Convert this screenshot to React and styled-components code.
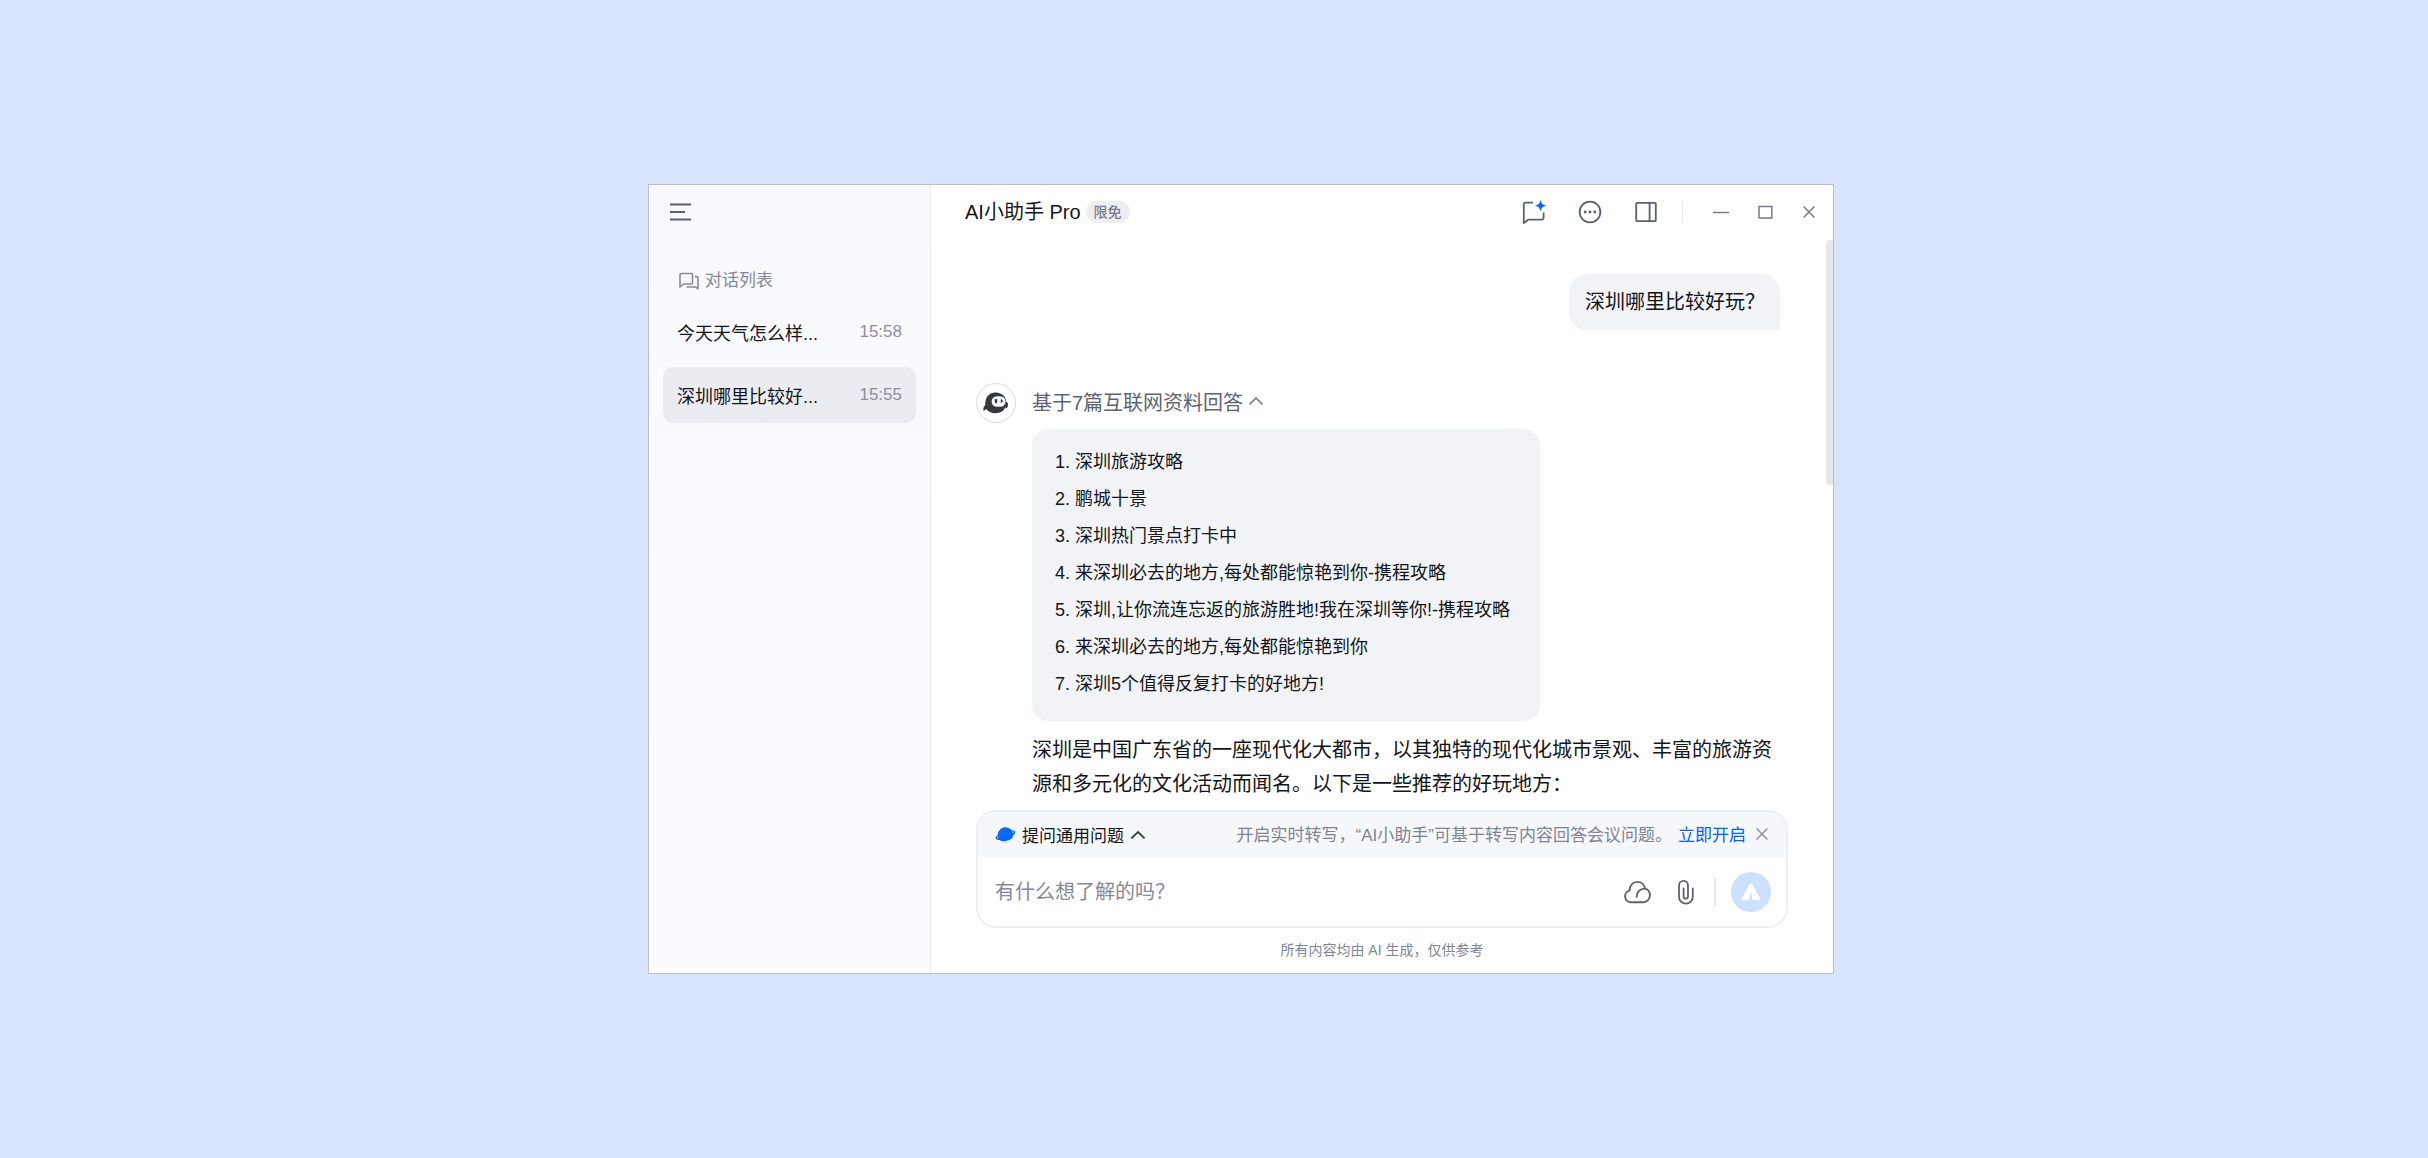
import React, { useState } from "react";
import styled, { createGlobalStyle } from "styled-components";

const GlobalStyle = createGlobalStyle`
  *, *::before, *::after { box-sizing: border-box; }
  body {
    margin: 0;
    background: #d8e3fe;
    color: #14151a;
    font-family: "Liberation Sans", "Noto Sans CJK SC", sans-serif;
    font-size: 20px;
  }
  button, input { font: inherit; color: inherit; }
  svg { display: block; flex: none; }
`;

const Desktop = styled.div`
  min-height: 100vh;
  display: grid;
  place-items: center;
  padding: 24px 0 24px 54px;
`;

const Window = styled.div`
  display: grid;
  grid-template-columns: 282px minmax(0, 1fr);
  width: 100%;
  max-width: 1186px;
  border: 1px solid #bdbfc4;
  background: #ffffff;
`;

const Sidebar = styled.aside`
  border-right: 1px solid #e9ebf1;
  background: linear-gradient(180deg, #f7f9fd 0%, #fbfcff 60%, #fcfcff 100%);
`;

const SidebarTop = styled.div`
  display: flex;
  align-items: center;
  height: 55px;
  padding: 0 21px 2px;
`;

const IconButton = styled.button`
  display: flex;
  align-items: center;
  justify-content: center;
  flex: none;
  padding: 0;
  border: 0;
  background: none;
  color: ${(p) => p.$color || "#5c6170"};
  cursor: pointer;
`;

const SectionTitle = styled.h2`
  display: flex;
  align-items: center;
  gap: 6px;
  margin: 29px 0 11px;
  padding: 0 30px;
  font-size: 17px;
  font-weight: 400;
  line-height: 24px;
  color: #868a99;
`;

const ConversationList = styled.ul`
  display: flex;
  flex-direction: column;
  gap: 7px;
  margin: 0;
  padding: 0 14px;
  list-style: none;
`;

const Conversation = styled.button`
  display: flex;
  align-items: center;
  justify-content: space-between;
  width: 100%;
  height: 56px;
  padding: 0 14px;
  border: 0;
  border-radius: 10px;
  background: ${(p) => (p.$active ? "#ebecf2" : "transparent")};
  font-size: 18px;
  text-align: left;
  cursor: pointer;
`;

const Time = styled.time`
  font-size: 17px;
  color: #8c8f9d;
`;

const Main = styled.main`
  display: flex;
  flex-direction: column;
  min-width: 0;
`;

const Header = styled.header`
  display: flex;
  align-items: center;
  justify-content: space-between;
  height: 55px;
  padding: 0 18px 2px 34px;
`;

const TitleGroup = styled.div`
  display: flex;
  align-items: center;
  gap: 5px;
`;

const Title = styled.h1`
  margin: 0;
  font-size: 20px;
  font-weight: 400;
  line-height: 28px;
`;

const Badge = styled.span`
  padding: 0 8px;
  border-radius: 11px;
  background: #edeef0;
  font-size: 14px;
  font-weight: 500;
  line-height: 22px;
  color: #777c8c;
`;

const Toolbar = styled.div`
  display: flex;
  align-items: center;
  gap: ${(p) => p.$gap}px;
`;

const Divider = styled.span`
  flex: none;
  width: ${(p) => p.$width}px;
  height: ${(p) => p.$height}px;
  margin: ${(p) => p.$margin};
  background: #e6e8ec;
`;

const ChatArea = styled.section`
  position: relative;
  display: flex;
  flex-direction: column;
  gap: 53px;
  padding: 34px 53px 9px 45px;
`;

const ScrollThumb = styled.div`
  position: absolute;
  top: 0;
  right: 0;
  width: 7px;
  height: 43%;
  border-radius: 4px 0 0 4px;
  background: #e5e7ea;
`;

const UserBubble = styled.p`
  align-self: flex-end;
  margin: 0;
  padding: 12px 15px 12px 16px;
  border-radius: 18px 18px 0 18px;
  background: #f1f3f7;
  line-height: 32px;
`;

const Answer = styled.article`
  display: flex;
  align-items: flex-start;
  gap: 16px;
`;

const Avatar = styled.div`
  display: grid;
  place-items: center;
  flex: none;
  width: 40px;
  height: 40px;
  border: 1px solid #d9dce3;
  border-radius: 50%;
`;

const AnswerBody = styled.div`
  flex: 1;
  min-width: 0;
`;

const SourceToggle = styled.button`
  display: flex;
  align-items: center;
  gap: 5px;
  height: 36px;
  padding: 0;
  border: 0;
  background: none;
  color: #5e6373;
  cursor: pointer;
`;

const Sources = styled.ol`
  width: fit-content;
  margin: 10px 0 0;
  padding: 15px 30px 18px 43px;
  border-radius: 16px;
  background: #f1f3f7;
  font-size: 18px;
  line-height: 37px;
`;

const Paragraph = styled.p`
  margin: 12px 0 0;
  line-height: 34px;
`;

const Composer = styled.form`
  margin: 0 45px;
  border: 2px solid #eeeff2;
  border-radius: 20px;
  overflow: hidden;
`;

const ComposerBar = styled.div`
  display: flex;
  align-items: center;
  justify-content: space-between;
  height: 45px;
  padding: 0 18px 0 17px;
  background: #f6f7fa;
  font-size: 17px;
`;

const ModeButton = styled.button`
  display: flex;
  align-items: center;
  gap: 6px;
  padding: 0;
  border: 0;
  background: none;
  cursor: pointer;
`;

const Notice = styled.div`
  display: flex;
  align-items: center;
  padding-bottom: 2px;
  color: #7f8494;
`;

const NoticeLink = styled.a`
  margin: 0 10px 0 6px;
  color: #0062ff;
  text-decoration: none;
`;

const ComposerRow = styled.div`
  display: flex;
  align-items: center;
  height: 69px;
  padding: 0 15px 0 17px;
`;

const PromptInput = styled.input`
  flex: 1;
  min-width: 0;
  padding: 2px 0 0;
  border: 0;
  outline: 0;
  background: none;
  &::placeholder { color: #858997; opacity: 1; }
`;

const SendButton = styled.button`
  flex: none;
  width: 40px;
  height: 40px;
  padding: 0;
  border: 0;
  border-radius: 50%;
  background: #cce0ff;
  cursor: pointer;
`;

const Disclaimer = styled.p`
  margin: 12px 0 13px;
  font-size: 14px;
  line-height: 20px;
  text-align: center;
  color: #7f8494;
`;

const MenuIcon = () => (
  <svg width="22" height="18" viewBox="0 0 22 18" stroke="currentColor" strokeWidth="1.800">
    <path d="M0 1.500h21M0 9h15M0 16.500h21" />
  </svg>
);

const ChatsIcon = () => (
  <svg width="20" height="18" viewBox="0 0 20 18" fill="none" stroke="currentColor" strokeWidth="1.600" strokeLinejoin="round">
    <path d="M2.300 1.500h9.900a1.300 1.300 0 0 1 1.300 1.300v7.900a1.300 1.300 0 0 1-1.300 1.300H4.500L1 15V2.800A1.300 1.300 0 0 1 2.300 1.500z" />
    <path d="M15.800 4.600h2A1.200 1.200 0 0 1 19 5.800V16.800l-2.600-1.800H7.600" />
  </svg>
);

const NewChatIcon = () => (
  <svg width="24" height="24" viewBox="0 0 24 24" fill="none">
    <path d="M11 2.700H3.300A1.500 1.500 0 0 0 1.800 4.200V23l4.400-3.300h13.900a1.500 1.500 0 0 0 1.500-1.500v-5.700" stroke="currentColor" strokeWidth="1.800" strokeLinejoin="round" />
    <path d="M18.600.8c.6 3 1.900 4.300 4.900 4.900-3 .6-4.300 1.900-4.900 4.900-.6-3-1.900-4.300-4.900-4.900 3-.6 4.300-1.900 4.900-4.900z" fill="#0062ff" stroke="#0062ff" strokeWidth=".6" />
  </svg>
);

const MoreIcon = () => (
  <svg width="24" height="24" viewBox="0 0 24 24" fill="none">
    <circle cx="12" cy="12" r="10.400" stroke="currentColor" strokeWidth="1.800" />
    <g fill="currentColor">
      <circle cx="7.200" cy="12" r="1.400" />
      <circle cx="12" cy="12" r="1.400" />
      <circle cx="16.800" cy="12" r="1.400" />
    </g>
  </svg>
);

const PanelIcon = () => (
  <svg width="24" height="24" viewBox="0 0 24 24" fill="none" stroke="currentColor" strokeWidth="1.800">
    <rect x="2.200" y="2.800" width="19.600" height="18.400" rx="1" />
    <path d="M15.600 3v18" />
  </svg>
);

const MinimizeIcon = () => (
  <svg width="16" height="16" viewBox="0 0 16 16" stroke="currentColor" strokeWidth="1.400">
    <path d="M0 8.500h16" />
  </svg>
);

const MaximizeIcon = () => (
  <svg width="16" height="16" viewBox="0 0 16 16" fill="none" stroke="currentColor" strokeWidth="1.500">
    <rect x="1" y="2.500" width="12.800" height="11.500" />
  </svg>
);

const CloseIcon = () => (
  <svg width="12" height="12" viewBox="0 0 12 12" stroke="currentColor" strokeWidth="1.400">
    <path d="M.6.6l10.800 10.800M11.400.6L.6 11.400" />
  </svg>
);

const CaretIcon = ({ color }) => (
  <svg width="16" height="10" viewBox="0 0 16 10" fill="none" stroke={color} strokeWidth="1.800">
    <path d="M1.400 8.400L8 2l6.600 6.400" />
  </svg>
);

const NinjaIcon = () => (
  <svg width="28" height="24" viewBox="0 0 28 24">
    <path d="M13.500 1.600c6 0 10.200 3.600 10.600 9 1 .4 1.800 1.500 1.900 3.200-.2 2-.9 3.400-1.700 3.700-.4-.3-.7-.9-.9-1.500-1.500 4-5 6.200-9.700 6.200-4.300 0-7.800-1.600-9.500-4.200-1 1-2 1.700-2.800 1.600-.3-1.700.2-3.800 1.900-5.500C3 6.300 7.200 1.600 13.500 1.600z" fill="#35373b" />
    <rect x="9.600" y="5.200" width="14" height="10.600" rx="5.300" fill="#f6f7f9" />
    <ellipse cx="14" cy="10" rx="1.300" ry="2.200" fill="#35373b" />
    <path d="M18.800 7.800l2.400 2.200-2.400 2.200z" fill="#35373b" />
  </svg>
);

const PlanetIcon = () => (
  <svg width="21" height="18" viewBox="0 0 21 18" fill="none">
    <g transform="rotate(-18 10.500 9)">
      <ellipse cx="10.500" cy="9" rx="9.600" ry="3.200" stroke="#3a85ff" strokeWidth="1.300" />
      <circle cx="10.500" cy="8.800" r="7.600" fill="#0a67ff" />
      <path d="M2.600 11.600c3 3.200 13 3.200 16 0" stroke="#f6f7fa" strokeWidth="1.200" transform="translate(0 1.500)" />
      <path d="M1.200 8c-1 2 2.600 4.300 9.300 4.300s10.300-2.300 9.300-4.300" stroke="#0a67ff" strokeWidth="1.500" />
    </g>
  </svg>
);

const CloudIcon = () => (
  <svg width="28" height="24" viewBox="0 0 28 24" fill="none" stroke="currentColor" strokeWidth="1.900" strokeLinecap="round">
    <path d="M7.200 22.200a5.900 5.900 0 0 1-1.700-11.600C5.900 5.300 9.200 1.900 13.500 1.900c3.700 0 6.800 2.700 7.600 6.700 2.900.8 4.800 3.400 4.800 6.600 0 4-2.900 7-6.500 7z" />
    <path d="M12.600 16.800c0-4.500 3.200-8.100 8.200-8.200" />
  </svg>
);

const ClipIcon = () => (
  <svg width="18" height="26" viewBox="0 0 18 26" fill="none" stroke="currentColor" strokeWidth="1.800" strokeLinecap="round">
    <path d="M15.800 9.400v8.400a6.900 6.900 0 0 1-13.800 0V6.400a4.500 4.500 0 0 1 9 0v11a2.200 2.200 0 0 1-4.400 0V9.400" />
  </svg>
);

const SendIcon = () => (
  <svg width="40" height="40" viewBox="0 0 40 40" fill="#ffffff">
    <path d="M20 11.500c.7 0 1.200.4 1.600 1.100l7.100 13.600c.6 1.300 0 2.200-1.400 2.100l-4.300-.5c-1-.1-1.600-.6-1.700-1.600L20 19l-1.300 7.200c-.1 1-.7 1.500-1.700 1.600l-4.300.5c-1.400.1-2-.8-1.400-2.100l7.100-13.600c.4-.7.9-1.100 1.600-1.100z" />
  </svg>
);

const conversations = [
  { title: "今天天气怎么样...", time: "15:58" },
  { title: "深圳哪里比较好...", time: "15:55" },
];

const sources = [
  "深圳旅游攻略",
  "鹏城十景",
  "深圳热门景点打卡中",
  "来深圳必去的地方,每处都能惊艳到你-携程攻略",
  "深圳,让你流连忘返的旅游胜地!我在深圳等你!-携程攻略",
  "来深圳必去的地方,每处都能惊艳到你",
  "深圳5个值得反复打卡的好地方!",
];

export default function App() {
  const [active, setActive] = useState(1);
  const [open, setOpen] = useState(true);

  return (
    <>
      <GlobalStyle />
      <Desktop>
        <Window>
          <Sidebar>
            <SidebarTop>
              <IconButton type="button" aria-label="菜单"><MenuIcon /></IconButton>
            </SidebarTop>
            <SectionTitle><ChatsIcon />对话列表</SectionTitle>
            <ConversationList>
              {conversations.map((item, i) => (
                <li key={item.title}>
                  <Conversation type="button" $active={i === active} onClick={() => setActive(i)}>
                    {item.title}
                    <Time>{item.time}</Time>
                  </Conversation>
                </li>
              ))}
            </ConversationList>
          </Sidebar>

          <Main>
            <Header>
              <TitleGroup>
                <Title>AI小助手 Pro</Title>
                <Badge>限免</Badge>
              </TitleGroup>
              <Toolbar $gap={0}>
                <Toolbar $gap={32}>
                  <IconButton type="button" aria-label="新建对话"><NewChatIcon /></IconButton>
                  <IconButton type="button" aria-label="更多"><MoreIcon /></IconButton>
                  <IconButton type="button" aria-label="侧边面板"><PanelIcon /></IconButton>
                </Toolbar>
                <Divider $width={1} $height={22} $margin="0 30px 0 24px" />
                <Toolbar $gap={29}>
                  <IconButton type="button" aria-label="最小化" $color="#767a88"><MinimizeIcon /></IconButton>
                  <IconButton type="button" aria-label="最大化" $color="#767a88"><MaximizeIcon /></IconButton>
                  <IconButton type="button" aria-label="关闭" $color="#767a88"><CloseIcon /></IconButton>
                </Toolbar>
              </Toolbar>
            </Header>

            <ChatArea>
              <ScrollThumb />
              <UserBubble>深圳哪里比较好玩？</UserBubble>
              <Answer>
                <Avatar><NinjaIcon /></Avatar>
                <AnswerBody>
                  <SourceToggle type="button" aria-expanded={open} onClick={() => setOpen(!open)}>
                    基于7篇互联网资料回答
                    <CaretIcon color="#858997" />
                  </SourceToggle>
                  {open && (
                    <Sources>
                      {sources.map((s) => <li key={s}>{s}</li>)}
                    </Sources>
                  )}
                  <Paragraph>
                    深圳是中国广东省的一座现代化大都市，以其独特的现代化城市景观、丰富的旅游资源和多元化的文化活动而闻名。以下是一些推荐的好玩地方：
                  </Paragraph>
                </AnswerBody>
              </Answer>
            </ChatArea>

            <Composer onSubmit={(e) => e.preventDefault()}>
              <ComposerBar>
                <ModeButton type="button">
                  <PlanetIcon />
                  提问通用问题
                  <CaretIcon color="#3a3c45" />
                </ModeButton>
                <Notice>
                  开启实时转写，“AI小助手”可基于转写内容回答会议问题。
                  <NoticeLink href="#start">立即开启</NoticeLink>
                  <IconButton type="button" aria-label="关闭提示" $color="#8b8f9b"><CloseIcon /></IconButton>
                </Notice>
              </ComposerBar>
              <ComposerRow>
                <PromptInput type="text" aria-label="提问" placeholder="有什么想了解的吗？" />
                <Toolbar $gap={25}>
                  <IconButton type="button" aria-label="云文件"><CloudIcon /></IconButton>
                  <IconButton type="button" aria-label="附件"><ClipIcon /></IconButton>
                </Toolbar>
                <Divider $width={2} $height={28} $margin="0 15px 0 19px" />
                <SendButton type="submit" aria-label="发送"><SendIcon /></SendButton>
              </ComposerRow>
            </Composer>
            <Disclaimer>所有内容均由 AI 生成，仅供参考</Disclaimer>
          </Main>
        </Window>
      </Desktop>
    </>
  );
}
